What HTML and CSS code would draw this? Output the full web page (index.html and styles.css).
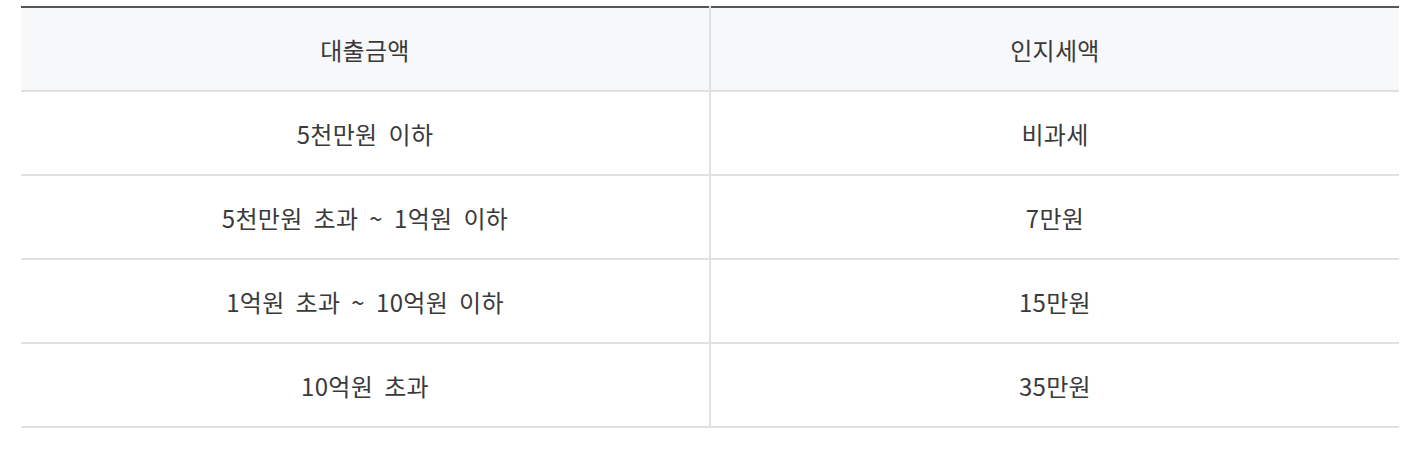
FILE: index.html
```html
<!DOCTYPE html>
<html lang="ko">
<head>
<meta charset="utf-8">
<link rel="stylesheet" href="styles.css">
</head>
<body>
<div class="wrap">
<table class="tax">
<thead>
<tr><th>대출금액</th><th>인지세액</th></tr>
</thead>
<tbody>
<tr><td>5천만원 이하</td><td>비과세</td></tr>
<tr><td>5천만원 초과 ~ 1억원 이하</td><td>7만원</td></tr>
<tr><td>1억원 초과 ~ 10억원 이하</td><td>15만원</td></tr>
<tr><td>10억원 초과</td><td>35만원</td></tr>
</tbody>
</table>
</div>
</body>
</html>
```
FILE: styles.css
```css
html, body {
  margin: 0;
  padding: 0;
  background: #ffffff;
}
.wrap {
  padding: 6px 18px 0 21px;
}
.tax {
  width: 1378px;
  border-collapse: collapse;
  table-layout: fixed;
  font-family: "Noto Sans CJK KR", "Noto Sans", sans-serif;
  font-size: 24px;
  word-spacing: 4px;
  letter-spacing: 0.3px;
  color: #3a3a3a;
  border-top: 2px solid #555555;
}
.tax th, .tax td {
  height: 84px;
  padding: 0;
  text-align: center;
  vertical-align: middle;
  font-weight: normal;
  border-bottom: 2px solid #e1e1e1;
  border-left: 2px solid #e1e1e1;
  box-sizing: border-box;
}
.tax th:first-child, .tax td:first-child {
  border-left: none;
}
.tax th {
  background: #f7f8fa;
}
```
